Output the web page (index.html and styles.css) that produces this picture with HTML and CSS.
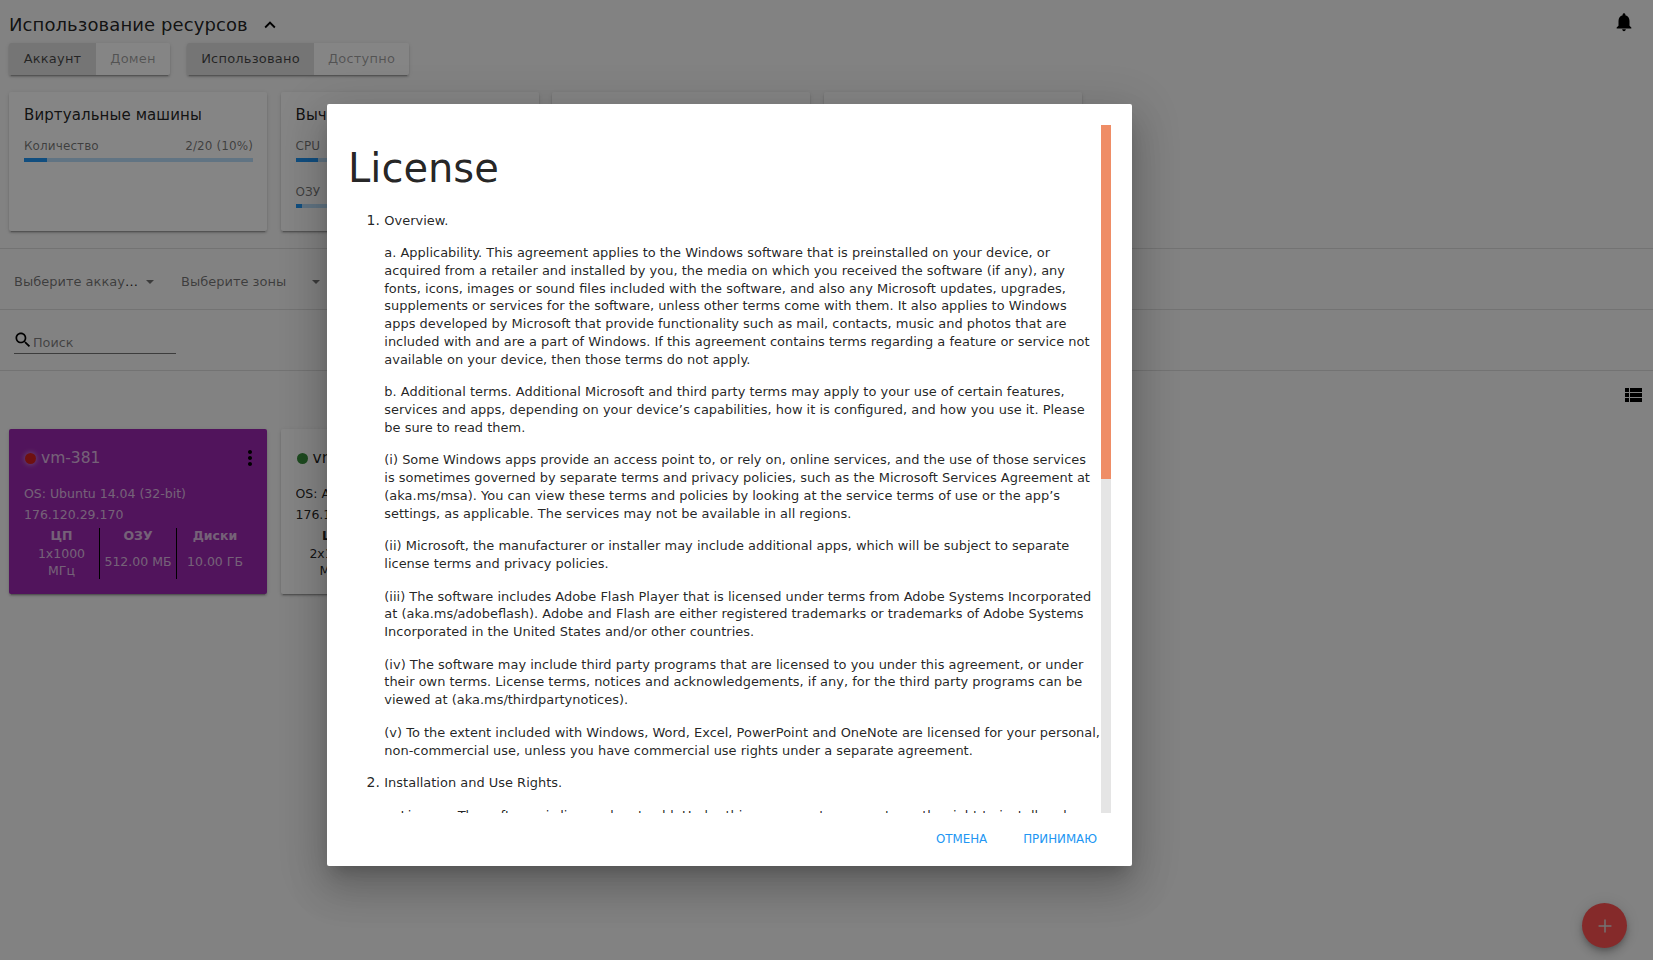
FILE: index.html
```html
<!DOCTYPE html>
<html lang="ru">
<head>
<meta charset="utf-8">
<title>Виртуальные машины</title>
<link rel="stylesheet" href="styles.css">
</head>
<body>
<main class="page">
  <header class="top">
    <h2 class="title">Использование ресурсов</h2>
    <svg class="chevron" viewBox="0 0 24 24"><path d="M12 8l-6 6 1.41 1.41L12 10.83l4.59 4.58L18 14z"/></svg>
    <svg class="bell" viewBox="0 0 24 24"><path d="M12 22c1.1 0 2-.9 2-2h-4c0 1.1.89 2 2 2zm6-6v-5c0-3.07-1.64-5.64-4.5-6.32V4c0-.83-.67-1.5-1.5-1.5s-1.5.67-1.5 1.5v.68C7.63 5.36 6 7.92 6 11v5l-2 2v1h16v-1l-2-2z"/></svg>
  </header>
  <div class="toggles">
    <div class="group group-a"><span class="toggle on">Аккаунт</span><span class="toggle">Домен</span></div>
    <div class="group group-b"><span class="toggle on">Использовано</span><span class="toggle">Доступно</span></div>
  </div>
  <section class="cards">
    <article class="card usage">
      <h3 class="card-title">Виртуальные машины</h3>
      <div class="stat"><span>Количество</span><span>2/20 (10%)</span></div>
      <div class="bar"><div class="fill" style="width:10%"></div></div>
    </article>
    <article class="card usage">
      <h3 class="card-title">Выч</h3>
      <div class="stat"><span>CPU</span></div>
      <div class="bar"><div class="fill" style="width:10%"></div></div>
      <div class="stat second"><span>ОЗУ</span></div>
      <div class="bar"><div class="fill" style="width:3%"></div></div>
    </article>
    <article class="card usage"></article>
    <article class="card usage"></article>
  </section>
  <section class="filters">
    <div class="select accounts"><span class="value">Выберите аккау<b class="dots">…</b></span><i class="arrow"></i></div>
    <div class="select zones"><span class="value">Выберите зоны</span><i class="arrow"></i></div>
  </section>
  <section class="search-row">
    <div class="search">
      <svg class="lens" viewBox="0 0 24 24"><path d="M15.5 14h-.79l-.28-.27C15.41 12.59 16 11.11 16 9.5 16 5.91 13.09 3 9.5 3S3 5.91 3 9.5 5.91 16 9.5 16c1.61 0 3.09-.59 4.23-1.57l.27.28v.79l5 4.99L20.49 19l-4.99-5zm-6 0C7.01 14 5 11.99 5 9.5S7.01 5 9.5 5 14 7.01 14 9.5 11.99 14 9.5 14z"/></svg>
      <span class="placeholder">Поиск</span>
    </div>
  </section>
  <div class="view-row">
    <svg class="list-icon" viewBox="0 0 24 24"><path d="M4 14h4v-4H4v4zm0 5h4v-4H4v4zM4 9h4V5H4v4zm5 5h12v-4H9v4zm0 5h12v-4H9v4zM9 5v4h12V5H9z"/></svg>
  </div>
  <section class="cards vms">
    <article class="card vm purple">
      <div class="vm-head"><i class="dot red"></i><span class="vm-name">vm-381</span>
        <svg class="more" viewBox="0 0 24 24"><path d="M12 8c1.1 0 2-.9 2-2s-.9-2-2-2-2 .9-2 2 .9 2 2 2zm0 2c-1.1 0-2 .9-2 2s.9 2 2 2 2-.9 2-2-.9-2-2-2zm0 6c-1.1 0-2 .9-2 2s.9 2 2 2 2-.9 2-2-.9-2-2-2z"/></svg>
      </div>
      <div class="vm-line">OS: Ubuntu 14.04 (32-bit)</div>
      <div class="vm-line">176.120.29.170</div>
      <div class="specs">
        <div class="spec"><b>ЦП</b><span>1x1000<br>МГц</span></div>
        <div class="spec"><b>ОЗУ</b><span>512.00 МБ</span></div>
        <div class="spec"><b>Диски</b><span>10.00 ГБ</span></div>
      </div>
    </article>
    <article class="card vm">
      <div class="vm-head"><i class="dot green"></i><span class="vm-name">vm</span></div>
      <div class="vm-line">OS: A</div>
      <div class="vm-line">176.1</div>
      <div class="specs">
        <div class="spec"><b>ЦП</b><span>2x1000<br>МГц</span></div>
      </div>
    </article>
  </section>
</main>
<button class="fab"><svg viewBox="0 0 24 24"><path d="M19 12.8h-6.2V19h-1.6v-6.2H5v-1.6h6.2V5h1.6v6.2H19z"/></svg></button>
<div class="backdrop"></div>
<div class="dialog">
  <div class="content">
    <div class="text">
      <h1 class="heading">License</h1>
      <ol class="terms">
        <li><p>Overview.</p>
          <p>a. Applicability. This agreement applies to the Windows software that is preinstalled on your device, or<br>acquired from a retailer and installed by you, the media on which you received the software (if any), any<br>fonts, icons, images or sound files included with the software, and also any Microsoft updates, upgrades,<br>supplements or services for the software, unless other terms come with them. It also applies to Windows<br>apps developed by Microsoft that provide functionality such as mail, contacts, music and photos that are<br>included with and are a part of Windows. If this agreement contains terms regarding a feature or service not<br>available on your device, then those terms do not apply.</p>
          <p>b. Additional terms. Additional Microsoft and third party terms may apply to your use of certain features,<br>services and apps, depending on your device’s capabilities, how it is configured, and how you use it. Please<br>be sure to read them.</p>
          <p>(i) Some Windows apps provide an access point to, or rely on, online services, and the use of those services<br>is sometimes governed by separate terms and privacy policies, such as the Microsoft Services Agreement at<br>(aka.ms/msa). You can view these terms and policies by looking at the service terms of use or the app’s<br>settings, as applicable. The services may not be available in all regions.</p>
          <p>(ii) Microsoft, the manufacturer or installer may include additional apps, which will be subject to separate<br>license terms and privacy policies.</p>
          <p>(iii) The software includes Adobe Flash Player that is licensed under terms from Adobe Systems Incorporated<br>at (aka.ms/adobeflash). Adobe and Flash are either registered trademarks or trademarks of Adobe Systems<br>Incorporated in the United States and/or other countries.</p>
          <p>(iv) The software may include third party programs that are licensed to you under this agreement, or under<br>their own terms. License terms, notices and acknowledgements, if any, for the third party programs can be<br>viewed at (aka.ms/thirdpartynotices).</p>
          <p>(v) To the extent included with Windows, Word, Excel, PowerPoint and OneNote are licensed for your personal,<br>non-commercial use, unless you have commercial use rights under a separate agreement.</p>
        </li>
        <li><p>Installation and Use Rights.</p>
          <p>a. License. The software is licensed, not sold. Under this agreement, we grant you the right to install and run</p>
        </li>
      </ol>
    </div>
    <div class="track"><div class="thumb"></div></div>
  </div>
  <div class="actions"><button class="action">ОТМЕНА</button><button class="action">ПРИНИМАЮ</button></div>
</div>
</body>
</html>
```

FILE: styles.css
```css
* { box-sizing: border-box; }
html, body { height: 100%; }
body {
  margin: 0;
  overflow: hidden;
  background: #fafafa;
  color: rgba(0, 0, 0, .87);
  font: 13px/1.2 "DejaVu Sans", sans-serif;
}
h1, h2, h3, p { margin: 0; font-weight: 400; }
button { border: 0; font-family: inherit; background: none; }

.page { height: 100%; }
.top { display: flex; align-items: center; height: 43px; padding: 6px 16px 0 9px; }
.title { font-size: 18px; letter-spacing: .09px; }
.chevron { width: 22px; height: 22px; margin: 1px 0 0 11px; }
.bell { width: 22px; height: 22px; margin: -6px 2px 0 auto; }

.toggles { display: flex; gap: 17px; padding: 0 9px; }
.group {
  display: flex;
  height: 32px;
  border-radius: 2px;
  overflow: hidden;
  background: #fff;
  box-shadow: 0 3px 1px -2px rgba(0,0,0,.2), 0 2px 2px 0 rgba(0,0,0,.14), 0 1px 5px 0 rgba(0,0,0,.12);
}
.group-a { width: 161px; }
.group-b { width: 222px; }
.toggle { flex: 1 1 auto; text-align: center; line-height: 32px; letter-spacing: .2px; color: rgba(0,0,0,.38); }
.toggle.on { background: #e0e0e0; color: rgba(0,0,0,.7); }
.group-a .on { flex: 0 0 87px; }
.group-b .on { flex: 0 0 127px; }

.cards { display: flex; gap: 13.5px; padding: 17px 9px 0; }
.card {
  width: 258px;
  flex: none;
  border-radius: 2px;
  background: #fff;
  box-shadow: 0 3px 1px -2px rgba(0,0,0,.2), 0 2px 2px 0 rgba(0,0,0,.14), 0 1px 5px 0 rgba(0,0,0,.12);
}
.usage { height: 139px; padding: 13px 14px 0 15px; }
.card-title { font-size: 15px; line-height: 20px; letter-spacing: .1px; white-space: nowrap; overflow: hidden; }
.stat { display: flex; justify-content: space-between; margin-top: 13px; line-height: 16px; font-size: 12px; letter-spacing: .1px; color: rgba(0,0,0,.54); }
.stat.second { margin-top: 22px; }
.bar { height: 4px; margin-top: 4px; background: #bbdefb; }
.fill { height: 4px; background: #2196f3; }

.filters { display: flex; gap: 27px; height: 61px; margin-top: 17px; padding: 0 14px; align-items: center; border-top: 1px solid #dcdcdc; }
.select { display: flex; align-items: center; justify-content: space-between; width: 139px; padding-top: 5px; color: rgba(0,0,0,.54); white-space: nowrap; }
.dots { color: rgba(0,0,0,.87); font-weight: 400; }
.arrow { border: 4px solid transparent; border-top-color: rgba(0,0,0,.54); border-bottom: 0; }
.accounts { width: 140px; }
.search-row { height: 61px; border-top: 1px solid #dcdcdc; padding: 20px 14px 0; }
.search { display: flex; width: 162px; height: 24px; border-bottom: 1px solid rgba(0,0,0,.54); }
.lens { width: 20px; height: 20px; margin-left: -1px; }
.placeholder { padding-top: 5px; font-size: 12.8px; color: rgba(0,0,0,.5); }
.view-row { display: flex; justify-content: flex-end; height: 59px; padding: 12px 8px 0; border-top: 1px solid #dcdcdc; }
.list-icon { width: 24px; height: 24px; }

.cards.vms { padding-top: 0; }
.vm { height: 165px; padding: 17px 14px 0 15px; font-size: 12.5px; }
.purple { background: #9c27b0; color: rgba(255,255,255,.7); }
.vm-head { display: flex; align-items: center; height: 24px; }
.dot { width: 11px; height: 11px; margin: 1px 5px 0 1px; border-radius: 50%; }
.red { background: #d32020; box-shadow: 0 0 5px 1px rgba(255,255,255,.4); }
.green { background: #388e3c; }
.vm-name { font-size: 15.5px; }
.more { width: 24px; height: 24px; margin: 0 -9px 0 auto; fill: #000; }
.vm-line { height: 21px; line-height: 21px; white-space: nowrap; overflow: hidden; }
.vm-head + .vm-line { margin-top: 13px; }
.specs { display: grid; grid-template-columns: 75px 77px 77px; height: 51px; margin-top: 3px; }
.spec { display: flex; flex-direction: column; text-align: center; white-space: nowrap; }
.spec + .spec { border-left: 1px solid #000; }
.spec b { line-height: 16px; }
.spec span { margin: auto 0; line-height: 17px; }

.fab { position: absolute; right: 26px; bottom: 12px; width: 45px; height: 45px; padding: 0; border-radius: 50%; background: #ff5252; box-shadow: 0 3px 5px -1px rgba(0,0,0,.2), 0 6px 10px 0 rgba(0,0,0,.14), 0 1px 18px 0 rgba(0,0,0,.12); }
.fab svg { display: block; width: 22px; height: 22px; margin: 1px auto 0; fill: #ddd; }

.backdrop { position: absolute; inset: 0; background: rgba(0,0,0,.48); }
.dialog {
  position: absolute;
  left: 327px;
  top: 104px;
  width: 805px;
  height: 762px;
  padding: 21px 21px 0;
  border-radius: 2px;
  background: #fff;
  box-shadow: 0 11px 15px -7px rgba(0,0,0,.2), 0 24px 38px 3px rgba(0,0,0,.14), 0 9px 46px 8px rgba(0,0,0,.12);
}
.content { display: flex; height: 688px; overflow: hidden; }
.text { flex: 1; min-width: 0; white-space: nowrap; overflow: hidden; }
.track { width: 10px; background: #e5e5e5; }
.thumb { height: 354px; background: #ef8d66; }
.heading { font-size: 40px; line-height: 48px; margin-top: 19px; }
.terms { margin: 19.6px 0 0; padding-left: 36.3px; font-size: 14px; }
.terms p { font-size: 12.98px; line-height: 17.8px; margin-bottom: 14.7px; }
.actions { display: flex; justify-content: flex-end; gap: 36px; padding: 19px 14px 0 0; }
.action { padding: 0; font-size: 11.85px; line-height: 15px; color: #2196f3; }
```
